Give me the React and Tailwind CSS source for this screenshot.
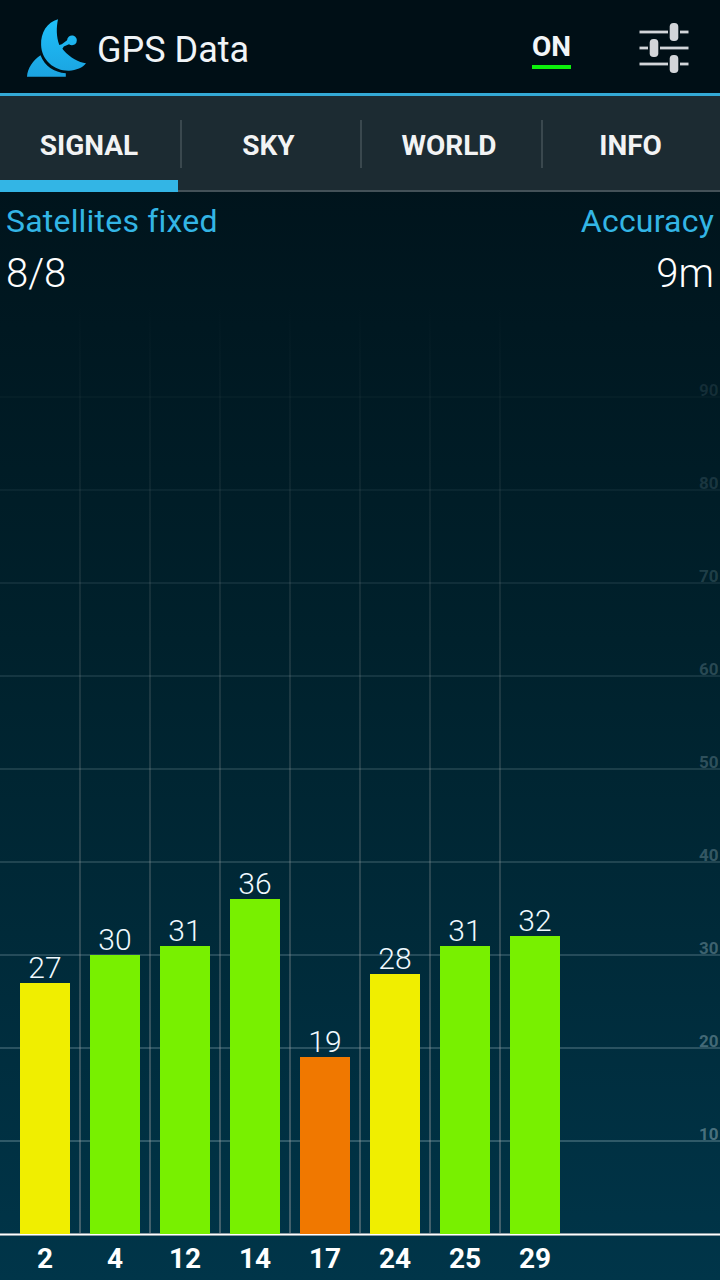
import React, { useState } from "react";

const TABS = ["SIGNAL", "SKY", "WORLD", "INFO"];

const SATELLITES = [
  { prn: 2, snr: 27 },
  { prn: 4, snr: 30 },
  { prn: 12, snr: 31 },
  { prn: 14, snr: 36 },
  { prn: 17, snr: 19 },
  { prn: 24, snr: 28 },
  { prn: 25, snr: 31 },
  { prn: 29, snr: 32 },
];

const GRID_LEVELS = [10, 20, 30, 40, 50, 60, 70, 80, 90];

const CHART_HEIGHT = 976;
const BASELINE = 930;
const UNIT = 9.3;
const SLOT = 70;

const barColor = (snr) => {
  if (snr >= 30) return "#78f000";
  if (snr >= 20) return "#f0ee00";
  return "#f07800";
};

function DishIcon() {
  return (
    <svg width="60" height="58" viewBox="0 0 60 58" className="shrink-0">
      <defs>
        <linearGradient id="dish" x1="0" y1="0" x2="0" y2="58" gradientUnits="userSpaceOnUse">
          <stop offset="0" stopColor="#1fc0fa" />
          <stop offset="1" stopColor="#1ba3e0" />
        </linearGradient>
      </defs>
      <g fill="url(#dish)">
        <path d="M31 0.3C20 3 13.6 14 14.1 26C14.6 41.500 27.500 52 42 51.700C49 51.500 56 48.500 59 44.300C52 43.300 43 38.800 36.600 31.200L35.400 29.800L36.800 27.600L42 25.200A4.900 4.900 0 1 0 40.100 21.300L34.800 25.200L32.300 25.900C29.200 18 29.300 8 31 0.300Z" />
        <path d="M13.500 36.300C6 41.500 0.500 49 0 57.800H38.800V54.200C27 53.600 17.600 47 13.500 36.300Z" />
      </g>
    </svg>
  );
}

function SlidersIcon() {
  return (
    <svg width="52" height="52" viewBox="0 0 52 52" fill="#d2d5d9">
      <rect x="1.500" y="8.600" width="28.500" height="2.800" />
      <rect x="42" y="8.600" width="8.500" height="2.800" />
      <rect x="31.700" y="1" width="8.600" height="18" rx="3.800" />
      <rect x="1.500" y="24.600" width="8.500" height="2.800" />
      <rect x="22" y="24.600" width="28.500" height="2.800" />
      <rect x="11.700" y="17" width="8.600" height="18" rx="3.800" />
      <rect x="1.500" y="40.600" width="28.500" height="2.800" />
      <rect x="42" y="40.600" width="8.500" height="2.800" />
      <rect x="31.700" y="33" width="8.600" height="18" rx="3.800" />
    </svg>
  );
}

function Header() {
  return (
    <header className="flex h-24 items-center border-b-[3px] border-[#33a9d6] bg-[#000f16] pl-[27px] pr-[30px] pt-0.5">
      <DishIcon />
      <h1 className="ml-[10px] mt-1 text-[36px] leading-none text-[#f0f4f7]">GPS Data</h1>
      <button className="ml-auto mt-[7px] border-b-4 border-[#0cf00c] pb-1 text-[28px] leading-[28px] font-bold text-[#f2f5f8]">
        ON
      </button>
      <button className="ml-[67px]">
        <SlidersIcon />
      </button>
    </header>
  );
}

function TabBar({ active, onSelect }) {
  return (
    <nav className="flex h-24 bg-[#1c2b32]">
      {TABS.map((tab, i) => (
        <button
          key={tab}
          onClick={() => onSelect(tab)}
          className={
            "flex items-center text-[28px] font-bold text-[#f2f3f4] " +
            (i === 0 ? "w-[178px] " : i === 3 ? "w-[180px] " : "w-[181px] ") +
            (tab === active ? "border-b-[12px] border-[#33b5e5]" : "border-b-2 border-[#435158]")
          }
        >
          {i > 0 && <span className={"mt-0.5 h-12 w-0.5 bg-[#3a484e] " + (i === 1 ? "ml-0.5" : "ml-px")} />}
          <span
            className={
              "flex-1 text-center " +
              (tab === active ? "pt-[15px]" : "pt-1.5") +
              (i === 0 ? "" : i === 3 ? " pr-0.5" : " pr-1")
            }
          >
            {tab}
          </span>
        </button>
      ))}
    </nav>
  );
}

function Stat({ label, value, right }) {
  return (
    <div className={right ? "text-right" : ""}>
      <div className="text-[32px] leading-[38px] tracking-[0.2px] text-[#33b5e5]">{label}</div>
      <div className="mt-[10px] text-[40px] leading-[47px] font-light text-white">{value}</div>
    </div>
  );
}

function SignalChart() {
  return (
    <svg width="720" height={CHART_HEIGHT} viewBox={`0 0 720 ${CHART_HEIGHT}`} className="block">
      <defs>
        <linearGradient id="fade" x1="0" y1="0" x2="0" y2={BASELINE} gradientUnits="userSpaceOnUse">
          <stop offset="0" stopColor="#a0a0a0" stopOpacity="0" />
          <stop offset="1" stopColor="#a0a0a0" stopOpacity="0.42" />
        </linearGradient>
      </defs>

      {GRID_LEVELS.map((level) => (
        <g key={level} fill="#a5c0c8" fillOpacity={0.32 * (1 - level / 100)}>
          <rect x="0" y={BASELINE - level * UNIT - 1} width="720" height="2" />
          <text
            x="718.5"
            y={BASELINE - level * UNIT - 1.5}
            textAnchor="end"
            className="text-[17px] font-bold"
            fillOpacity={0.08 + 0.42 * (1 - level / 100)}
          >
            {level}
          </text>
        </g>
      ))}

      {SATELLITES.slice(1).map((sat, i) => (
        <rect key={sat.prn} x={79 + i * SLOT} y="0" width="2" height={BASELINE + 1} fill="url(#fade)" />
      ))}

      <rect x="0" y={BASELINE - 1} width="720" height="3" fill="#8b9ba2" />
      <rect x="0" y={BASELINE} width="720" height="1" fill="#ffffff" />

      {SATELLITES.map((sat, i) => {
        const top = Math.round(BASELINE - sat.snr * UNIT);
        const center = 45 + i * SLOT;
        return (
          <g key={sat.prn} textAnchor="middle">
            <rect x={center - 25} y={top} width="50" height={BASELINE - top} fill={barColor(sat.snr)} />
            <text x={center} y={top - 5} fill="#f0faff" className="text-[30px] font-light">
              {sat.snr}
            </text>
            <text x={center} y="964" fill="#ffffff" className="text-[28px] font-bold">
              {sat.prn}
            </text>
          </g>
        );
      })}
    </svg>
  );
}

export default function App() {
  const [tab, setTab] = useState("SIGNAL");

  return (
    <div className="flex h-[1280px] w-[720px] flex-col overflow-hidden bg-linear-to-b from-[#000f16] via-[#00212c] to-[#003549] font-[Roboto,sans-serif]">
      <Header />
      <TabBar active={tab} onSelect={setTab} />
      <section className="flex h-28 justify-between px-1.5 pt-[10px]">
        <Stat label="Satellites fixed" value="8/8" />
        <Stat label="Accuracy" value="9m" right />
      </section>
      <SignalChart />
    </div>
  );
}
